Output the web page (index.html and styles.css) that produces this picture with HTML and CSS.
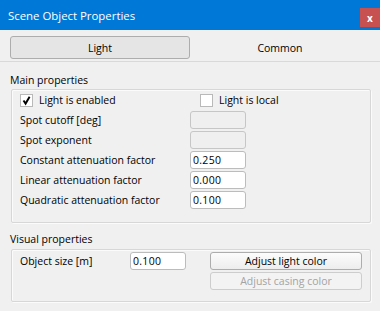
FILE: index.html
```html
<!DOCTYPE html>
<html>
<head>
<meta charset="utf-8">
<link rel="stylesheet" href="styles.css">
</head>
<body>
<div class="window">
  <div class="titlebar">
    <span class="title">Scene Object Properties</span>
    <div class="close">x</div>
  </div>
  <div class="tabs">
    <div class="tab active">Light</div>
    <div class="tab">Common</div>
  </div>
  <div class="section-label">Main properties</div>
  <div class="group main-group">
    <label class="check"><span class="box"><svg width="11" height="11" viewBox="0 0 11 11"><path d="M2.5 5.5 L4.6 8.6 L8.6 1.8" fill="none" stroke="#000" stroke-width="1.9"/></svg></span>Light is enabled</label>
    <label class="check local"><span class="box"></span>Light is local</label>
    <span class="lbl">Spot cutoff [deg]</span>
    <div class="field disabled"></div>
    <span class="lbl">Spot exponent</span>
    <div class="field disabled"></div>
    <span class="lbl">Constant attenuation factor</span>
    <div class="field">0.250</div>
    <span class="lbl">Linear attenuation factor</span>
    <div class="field">0.000</div>
    <span class="lbl">Quadratic attenuation factor</span>
    <div class="field">0.100</div>
  </div>
  <div class="section-label visual-label">Visual properties</div>
  <div class="group visual-group">
    <span class="lbl">Object size [m]</span>
    <div class="field">0.100</div>
    <div class="btn">Adjust light color</div>
    <div class="btn disabled second">Adjust casing color</div>
  </div>
</div>
</body>
</html>
```
FILE: styles.css
```css
html, body {
  margin: 0;
  padding: 0;
}
body {
  background: #f0f0f0;
  font-family: "Open Sans", "Noto Sans", sans-serif;
  font-size: 10.5px;
  color: #000;
}
.window {
  width: 380px;
  height: 311px;
  display: flex;
  flex-direction: column;
  overflow: hidden;
}
.titlebar {
  height: 30px;
  flex: none;
  background: #0078d7;
  color: #fff;
  display: flex;
  justify-content: space-between;
  align-items: flex-start;
}
.title {
  margin-top: 8px;
  padding-left: 8px;
  font-size: 11.4px;
  line-height: 16px;
}
.close {
  margin-top: 8px;
  width: 20px;
  height: 19px;
  background: #c75050;
  display: flex;
  align-items: center;
  justify-content: center;
  font-weight: bold;
  font-size: 10px;
  line-height: 10px;
}
.tabs {
  flex: none;
  height: 32px;
  box-sizing: border-box;
  padding: 6px 10px 0;
  display: flex;
  border-bottom: 1px solid #d9d9d9;
}
.tab {
  width: 180px;
  height: 23px;
  box-sizing: border-box;
  display: flex;
  align-items: center;
  justify-content: center;
}
.tab.active {
  background: #e5e5e5;
  border: 1px solid #adadad;
  border-radius: 3px;
}
.section-label {
  margin-top: 10px;
  padding-left: 10px;
  line-height: 16px;
}
.visual-label {
  margin-top: 8px;
}
.group {
  margin: 1px 9px 0 11px;
  border: 1px solid #d7d7d7;
  border-radius: 2px;
  box-shadow: 1px 1px 0 #fbfbfb, inset 1px 1px 0 #fbfbfb;
  display: grid;
  grid-auto-rows: 18px;
  row-gap: 2px;
  align-items: center;
}
.main-group {
  padding: 1px 0 13px 8px;
  grid-template-columns: 170px 56px;
}
.visual-group {
  margin-top: 2px;
  padding: 2px 0 11px 8px;
  grid-template-columns: 110px 80px 152px;
}
.check {
  display: flex;
  align-items: center;
  white-space: nowrap;
}
.check.local {
  margin-left: 10px;
}
.box {
  flex: none;
  width: 13px;
  height: 13px;
  box-sizing: border-box;
  border: 1px solid #b9b9b9;
  background: #fff;
  margin-right: 6px;
  display: flex;
  align-items: center;
  justify-content: center;
}
.lbl {
  white-space: nowrap;
}
.field {
  width: 56px;
  height: 18px;
  box-sizing: border-box;
  border: 1px solid #bcbcbc;
  border-radius: 3px;
  background: #fff;
  padding-left: 2px;
  line-height: 16px;
  letter-spacing: 0.3px;
}
.field.disabled {
  background: #efefef;
  border-color: #c6c6c6;
}
.btn {
  height: 18px;
  box-sizing: border-box;
  border: 1px solid #adadad;
  border-radius: 3px;
  background: linear-gradient(#fcfcfc, #ededed);
  display: flex;
  align-items: center;
  justify-content: center;
}
.btn.disabled {
  border-color: #cdcdcd;
  background: #f3f3f3;
  color: #a3a3a3;
}
.btn.second {
  grid-column: 3;
}
```
